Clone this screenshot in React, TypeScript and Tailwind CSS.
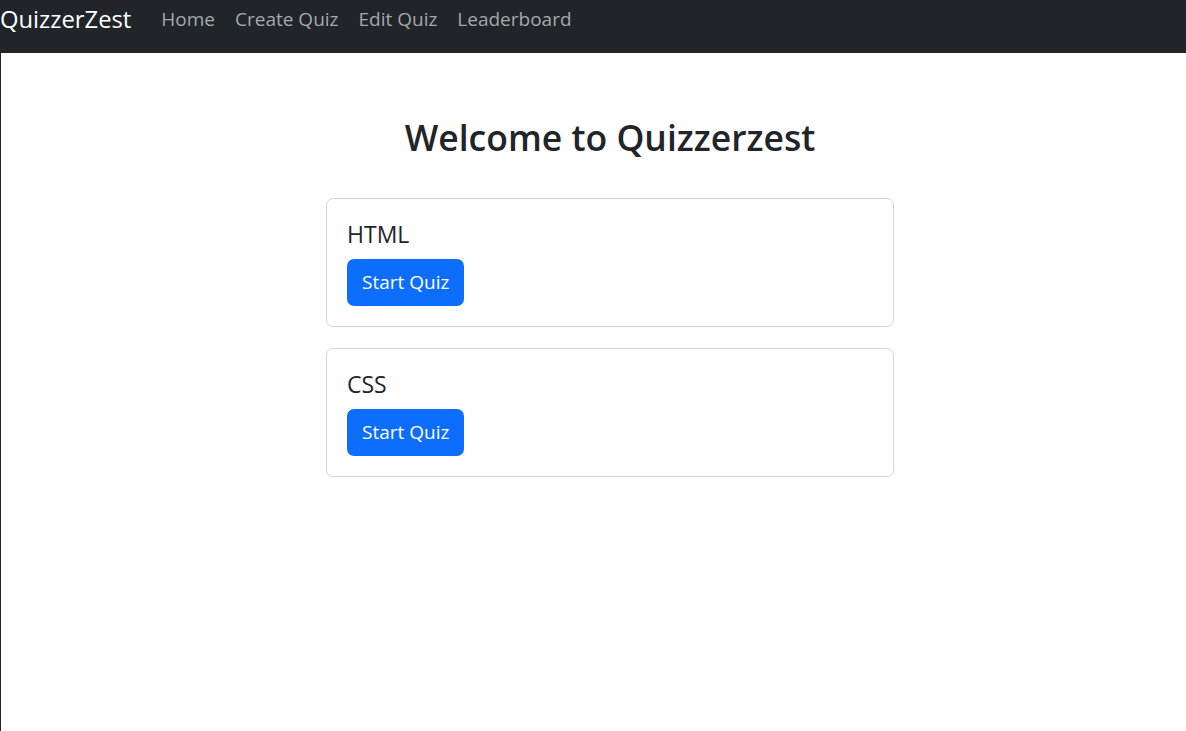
const quizzes = ["HTML", "CSS"];

const links = ["Home", "Create Quiz", "Edit Quiz", "Leaderboard"];

export default function App() {
  return (
    <div
      className="min-h-[731px] bg-white text-[#212529]"
      style={{ fontFamily: "'Open Sans', 'Noto Sans', sans-serif" }}
    >
      {/* Navbar */}
      <nav className="h-[53px] bg-[#212529] flex items-start">
        <a className="text-white text-[23.8px] leading-[38px] mr-[20px] whitespace-nowrap">QuizzerZest</a>
        <ul className="flex">
          {links.map((l) => (
            <li key={l}>
              <a className="block px-[10px] text-[19px] leading-[38px] text-[#a6a8aa] whitespace-nowrap">
                {l}
              </a>
            </li>
          ))}
        </ul>
      </nav>

      {/* Main */}
      <main className="border-l border-[#212529] min-h-[678px] pl-[33px]">
        <div className="w-[568px] mx-auto pt-[60px]">
          <h1 className="text-center text-[35.5px] font-semibold leading-[48px] mb-[37px] whitespace-nowrap -mx-20">
            Welcome to Quizzerzest
          </h1>
          <div className="flex flex-col gap-[21px]">
            {quizzes.map((q) => (
              <div key={q} className="border border-[#d3d4d5] rounded-[7px] p-[20px]">
                <h5 className="text-[23px] font-medium leading-[30px] mb-[10px]">{q}</h5>
                <button className="bg-[#0d6efd] text-white text-[19px] rounded-[7px] h-[47px] px-[15px]">
                  Start Quiz
                </button>
              </div>
            ))}
          </div>
        </div>
      </main>
    </div>
  );
}
